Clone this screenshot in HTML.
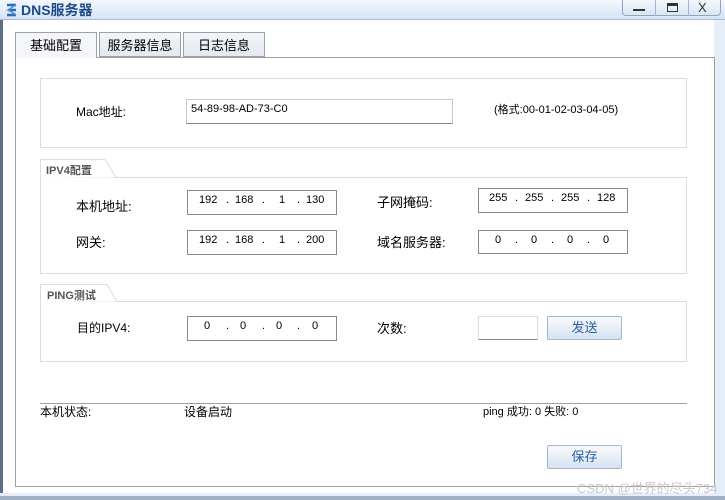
<!DOCTYPE html>
<html><head><meta charset="utf-8"><style>
*{margin:0;padding:0;box-sizing:border-box}
body{width:725px;height:500px;position:relative;overflow:hidden;background:#fff;font-family:"Liberation Sans","Noto Sans CJK SC",sans-serif;font-size:12px;color:#000}
.a{position:absolute}
.title{left:0;top:0;width:725px;height:20px;background:linear-gradient(#f4f8fd,#d4e3f4);border-bottom:1px solid #a9bcd4}
.inp{position:absolute;border:1px solid #8a8a8a;background:#fff;height:25px}
.ip span{position:absolute;top:3px;font-size:11px}
.grp{position:absolute;border:1px solid #dcdcdc;left:40px;width:647px}
.btn{position:absolute;border:1px solid #a8b8cc;border-radius:2px;background:linear-gradient(#f7fafd,#d5e3f1);color:#2a5fa0;text-align:center;font-size:13px;line-height:22px}
.lbl{position:absolute;font-size:12px}
</style></head><body>
<div class="a title"></div>
<svg class="a" style="left:4px;top:2px" width="16" height="16"><path d="M3 3h9M4 8h8M3 13h9" stroke="#2a6db5" stroke-width="2.5" fill="none"/><path d="M12 3c-4 2-6 4-8 5 3 1 5 3 8 5" stroke="#5a8fcf" stroke-width="1.5" fill="none"/></svg>
<div class="a" style="left:21px;top:0px;font-size:14px;font-weight:bold;color:#1d4a8a">DNS服务器</div>
<div class="a" style="left:622px;top:-1px;width:99px;height:17px;border:1px solid #8ea6c4;border-top:none;border-radius:0 0 4px 4px;background:linear-gradient(#f5f8fc,#dae6f3)"></div>
<div class="a" style="left:655px;top:0;width:1px;height:16px;background:#a3b6cd"></div>
<div class="a" style="left:688px;top:0;width:1px;height:16px;background:#a3b6cd"></div>
<div class="a" style="left:633px;top:9px;width:12px;height:2px;background:#333"></div>
<div class="a" style="left:667px;top:3px;width:11px;height:9px;border:1px solid #333;border-top:3px solid #333"></div>
<div class="a" style="left:698px;top:0px;font-size:13px;color:#333">X</div>
<div class="a" style="left:0;top:20px;width:3px;height:480px;background:#5c6f86"></div>
<div class="a" style="left:3px;top:20px;width:12px;height:480px;background:#fff"></div>
<div class="a" style="left:714px;top:20px;width:11px;height:480px;background:#e6eef9"></div>
<div class="a" style="left:0;top:493px;width:725px;height:7px;background:#e6eef9"></div>
<div class="a" style="left:0;top:496px;width:725px;height:4px;background:#9fb0c6"></div>
<div class="a" style="left:15px;top:57px;width:700px;height:430px;border:1px solid #a0a0a0;background:#fff"></div>
<div class="a" style="left:15px;top:32px;width:82px;height:26px;border:1px solid #a0a0a0;border-bottom:none;background:#f4f6f9;text-align:center;line-height:25px;font-size:13px">基础配置</div>
<div class="a" style="left:99px;top:32px;width:82px;height:25px;border:1px solid #a0a0a0;background:linear-gradient(#f2f5f9,#e3e9f1);text-align:center;line-height:25px;font-size:13px">服务器信息</div>
<div class="a" style="left:183px;top:32px;width:82px;height:25px;border:1px solid #a0a0a0;background:linear-gradient(#f2f5f9,#e3e9f1);text-align:center;line-height:25px;font-size:13px">日志信息</div>

<div class="grp" style="top:78px;height:70px"></div>
<div class="lbl" style="left:76px;top:103px">Mac地址:</div>
<div class="inp" style="left:186px;top:99px;width:267px;height:25px;border-color:#c8c8c8;border-bottom-color:#888"><span style="position:absolute;left:4px;top:3px;font-size:11px">54-89-98-AD-73-C0</span></div>
<div class="lbl" style="left:494px;top:101px;font-size:11px">(格式:00-01-02-03-04-05)</div>

<div class="grp" style="top:177px;height:97px"></div>
<svg class="a" style="left:40px;top:159px" width="80" height="19"><path d="M0.5 19V0.5H65L76 18.5" fill="#fff" stroke="#dcdcdc"/></svg>
<div class="lbl" style="left:46px;top:162px;font-size:11px;font-weight:bold;color:#555">IPV4配置</div>
<div class="lbl" style="left:76px;top:196px;font-size:13px">本机地址:</div>
<div class="lbl" style="left:76px;top:232px;font-size:13px">网关:</div>
<div class="inp ip" style="left:187px;top:190px;width:150px"><span style="left:11px">192</span><span style="left:38px">.</span><span style="left:47px">168</span><span style="left:74px">.</span><span style="left:91px">1</span><span style="left:109px">.</span><span style="left:118px">130</span></div>
<div class="inp ip" style="left:187px;top:230px;width:150px"><span style="left:11px">192</span><span style="left:38px">.</span><span style="left:47px">168</span><span style="left:74px">.</span><span style="left:91px">1</span><span style="left:109px">.</span><span style="left:118px">200</span></div>
<div class="lbl" style="left:377px;top:192px;font-size:13px">子网掩码:</div>
<div class="lbl" style="left:377px;top:232px;font-size:13px">域名服务器:</div>
<div class="inp ip" style="left:478px;top:188px;width:150px"><span style="left:10px">255</span><span style="left:36px">.</span><span style="left:46px">255</span><span style="left:72px">.</span><span style="left:82px">255</span><span style="left:108px">.</span><span style="left:118px">128</span></div>
<div class="inp ip" style="left:478px;top:230px;width:150px;height:24px"><span style="left:16px">0</span><span style="left:36px">.</span><span style="left:52px">0</span><span style="left:72px">.</span><span style="left:88px">0</span><span style="left:108px">.</span><span style="left:124px">0</span></div>

<div class="grp" style="top:301px;height:61px"></div>
<svg class="a" style="left:40px;top:284px" width="80" height="18"><path d="M0.5 18V0.5H67L77 17.5" fill="#fff" stroke="#dcdcdc"/></svg>
<div class="lbl" style="left:47px;top:287px;font-size:11px;font-weight:bold;color:#555">PING测试</div>
<div class="lbl" style="left:77px;top:319px;font-size:12px">目的IPV4:</div>
<div class="inp ip" style="left:187px;top:316px;width:150px"><span style="left:16px">0</span><span style="left:38px">.</span><span style="left:52px">0</span><span style="left:74px">.</span><span style="left:88px">0</span><span style="left:109px">.</span><span style="left:124px">0</span></div>
<div class="lbl" style="left:377px;top:318px;font-size:13px">次数:</div>
<div class="inp" style="left:478px;top:316px;width:60px;height:24px;border-color:#ddd;border-bottom-color:#888"></div>
<div class="btn" style="left:547px;top:316px;width:75px;height:24px">发送</div>

<div class="a" style="left:40px;top:403px;width:647px;height:1px;background:#a0a0a0"></div>
<div class="lbl" style="left:40px;top:403px;font-size:12px">本机状态:</div>
<div class="lbl" style="left:184px;top:403px;font-size:12px">设备启动</div>
<div class="lbl" style="left:483px;top:403px;font-size:11px">ping 成功: 0 失败: 0</div>
<div class="btn" style="left:547px;top:445px;width:75px;height:24px">保存</div>
<div class="a" style="left:577px;top:478px;font-size:13px;color:#c8c8c8">CSDN @世界的尽头734</div>
</body></html>
